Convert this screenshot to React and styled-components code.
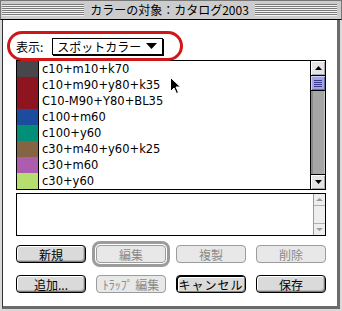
import React from "react";
import styled, { createGlobalStyle } from "styled-components";

const Global = createGlobalStyle`
  html, body { margin: 0; padding: 0; background: #d9d9d9; }
  body { font-family: "Noto Sans CJK JP", "DejaVu Sans", sans-serif; }
`;

const Window = styled.div`
  position: relative;
  width: 342px;
  height: 311px;
  box-sizing: border-box;
  background: #d9d9d9;
  display: flex;
  flex-direction: column;
  overflow: hidden;
`;

const TitleBar = styled.div`
  box-sizing: border-box;
  height: 20px;
  background: #cccccc;
  border: 1px solid #777;
  border-bottom-color: #000;
  padding: 0 4px 0 1px;
  display: flex;
  align-items: center;
`;

const Stripes = styled.div`
  flex: 1;
  height: 12px;
  background: repeating-linear-gradient(
    to bottom,
    #7a7a7a 0 1px,
    #f4f4f4 1px 2px
  );
`;

const Title = styled.div`
  padding: 0 6px;
  font-family: "Noto Sans CJK JP", sans-serif;
  font-size: 12px;
  line-height: 18px;
  color: #000;
  white-space: nowrap;
`;

const Body = styled.div`
  flex: 1;
  margin: 0 2px 2px 2px;
  background: #fff;
  border-left: 1px solid #333;
  border-right: 3px solid #6b6b6b;
  border-bottom: 3px solid #6b6b6b;
  padding: 11px 11px 0 13px;
  display: flex;
  flex-direction: column;
`;

const PopupWrap = styled.div`
  position: relative;
  z-index: 2;
  box-sizing: border-box;
  margin: 0 0 -1px -9px;
  width: 176px;
  height: 30px;
  border: 3px solid #d01616;
  border-radius: 15px;
  padding-left: 6px;
  display: flex;
  align-items: center;
  gap: 9px;
`;

const Label = styled.span`
  font-size: 12px;
  color: #000;
  font-family: "Noto Sans CJK JP", sans-serif;
`;

const Popup = styled.div`
  box-sizing: border-box;
  width: 111px;
  height: 17px;
  border: 1px solid #000;
  box-shadow: 1px 1px 0 #000;
  background: #fff;
  display: flex;
  align-items: center;
  justify-content: space-between;
  padding: 0 5px 0 4px;
  font-size: 12px;
  font-family: "Noto Sans CJK JP", sans-serif;
`;

const List = styled.div`
  box-sizing: border-box;
  height: 130px;
  border: 1px solid #000;
  display: grid;
  grid-template-columns: 1fr 15px;
`;

const Rows = styled.div`
  display: flex;
  flex-direction: column;
`;

const Row = styled.div`
  height: 16px;
  display: grid;
  grid-template-columns: 21px 1px 1fr;
`;

const Swatch = styled.div`
  background: ${(p) => p.$c};
`;

const Divider = styled.div`
  background: #000;
`;

const RowText = styled.div`
  padding-left: 3px;
  font-family: "DejaVu Sans", sans-serif;
  font-size: 11.5px;
  line-height: 16px;
  color: #000;
  white-space: nowrap;
`;

const ScrollBar = styled.div`
  border-left: 1px solid #000;
  display: flex;
  flex-direction: column;
`;

const ArrowBtn = styled.div`
  height: ${(p) => p.$h || 15}px;
  box-sizing: border-box;
  background: ${(p) => (p.$disabled ? "#eeeeee" : "#e4e4e4")};
  box-shadow: ${(p) =>
    p.$disabled ? "none" : "inset 1px 1px 0 #fff, inset -1px -1px 0 #a8a8a8"};
  ${(p) => (p.$top ? `border-bottom: 1px solid ${p.$line};` : `border-top: 1px solid ${p.$line};`)}
  display: flex;
  align-items: center;
  justify-content: center;
`;

const Thumb = styled.div`
  height: 15px;
  box-sizing: border-box;
  background: #a4a4e4;
  border-bottom: 1px solid #000;
  box-shadow: inset 1px 1px 0 #d0d0ff, inset -1px -1px 0 #6a6ab0;
  display: flex;
  flex-direction: column;
  justify-content: center;
  align-items: center;
  gap: 1px;
`;

const Grip = styled.div`
  width: 8px;
  height: 1px;
  background: #3c3c8c;
`;

const Track = styled.div`
  flex: 1;
  background: #a6a6a6;
  box-shadow: inset 2px 0 0 #8a8a8a, inset -1px 0 0 #c4c4c4;
`;

const TextBox = styled.div`
  box-sizing: border-box;
  margin-top: 3px;
  height: 43px;
  border: 1px solid #000;
  display: grid;
  grid-template-columns: 1fr 12px;
`;

const SmallBar = styled.div`
  border-left: 1px solid #9a9a9a;
  background: #eeeeee;
  display: flex;
  flex-direction: column;
  justify-content: space-between;
`;

const Buttons = styled.div`
  margin-top: 9px;
  display: grid;
  grid-template-columns: repeat(4, 70px);
  grid-auto-rows: 18px;
  column-gap: 10px;
  row-gap: 12px;
`;

const Button = styled.div`
  box-sizing: border-box;
  height: 18px;
  border: 1px solid ${(p) => (p.$disabled ? "#9c9c9c" : "#000")};
  border-radius: 4px;
  background: ${(p) => (p.$disabled ? "#e8e8e8" : "#dadada")};
  box-shadow: ${(p) =>
    p.$disabled
      ? "none"
      : p.$focus
      ? "inset 1px 1px 0 #000, inset 2px 2px 0 #fff, inset -1px -1px 0 #888"
      : "inset 1px 1px 0 #fff, inset -1px -1px 0 #7c7c7c, inset -2px -2px 0 #b8b8b8"};
  color: ${(p) => (p.$disabled ? "#8a8a8a" : "#000")};
  font-family: "Noto Sans CJK JP", sans-serif;
  font-size: 12px;
  letter-spacing: ${(p) => p.$ls || 0}px;
  display: flex;
  align-items: center;
  justify-content: center;
  white-space: nowrap;
`;

const DefaultRing = styled.div`
  margin: -4px;
  padding: 1px;
  border: 3px solid #9c9c9c;
  border-radius: 8px;
  display: flex;
  flex-direction: column;
`;

const Cursor = styled.svg`
  position: absolute;
  left: 170px;
  top: 77px;
  z-index: 5;
`;

const Tri = ({ up, color = "#000", w = 9, h = 5 }) => (
  <svg width={w} height={h} viewBox={`0 0 ${w} ${h}`}>
    <polygon
      points={up ? `0,${h} ${w},${h} ${w / 2},0` : `0,0 ${w},0 ${w / 2},${h}`}
      fill={color}
    />
  </svg>
);

const colors = [
  ["#48464b", "c10+m10+k70"],
  ["#8e1520", "c10+m90+y80+k35"],
  ["#8e1520", "C10-M90+Y80+BL35"],
  ["#1c4c9e", "c100+m60"],
  ["#028f77", "c100+y60"],
  ["#856444", "c30+m40+y60+k25"],
  ["#ae5cae", "c30+m60"],
  ["#b6de6e", "c30+y60"],
];

export default function App() {
  return (
    <>
      <Global />
      <Window>
        <TitleBar>
          <Stripes />
          <Title>カラーの対象：カタログ2003</Title>
          <Stripes />
        </TitleBar>
        <Body>
          <PopupWrap>
            <Label>表示:</Label>
            <Popup>
              <span>スポットカラー</span>
              <Tri w={11} h={6} />
            </Popup>
          </PopupWrap>
          <List>
            <Rows>
              {colors.map(([c, t]) => (
                <Row key={t}>
                  <Swatch $c={c} />
                  <Divider />
                  <RowText>{t}</RowText>
                </Row>
              ))}
            </Rows>
            <ScrollBar>
              <ArrowBtn $top $line="#000">
                <Tri up w={7} h={4} />
              </ArrowBtn>
              <Thumb>
                <Grip />
                <Grip />
                <Grip />
                <Grip />
              </Thumb>
              <Track />
              <ArrowBtn $line="#000">
                <Tri w={7} h={4} />
              </ArrowBtn>
            </ScrollBar>
          </List>
          <TextBox>
            <div />
            <SmallBar>
              <ArrowBtn $top $disabled $h={12} $line="#b0b0b0">
                <Tri up w={7} h={3} color="#9a9a9a" />
              </ArrowBtn>
              <ArrowBtn $disabled $h={12} $line="#b0b0b0">
                <Tri w={7} h={3} color="#9a9a9a" />
              </ArrowBtn>
            </SmallBar>
          </TextBox>
          <Buttons>
            <Button>新規</Button>
            <DefaultRing>
              <Button $disabled>編集</Button>
            </DefaultRing>
            <Button $disabled>複製</Button>
            <Button $disabled>削除</Button>
            <Button>追加...</Button>
            <Button $disabled>ﾄﾗｯﾌﾟ 編集</Button>
            <Button $focus $ls={1}>キャンセル</Button>
            <Button>保存</Button>
          </Buttons>
        </Body>
        <Cursor width="12" height="18" viewBox="0 0 12 18">
          <path
            d="M0.5 0.5 L0.5 14.5 L4 11 L6.5 16.5 L8.5 15.5 L6 10 L10.5 10 Z"
            fill="#000"
            stroke="#fff"
            strokeWidth="1"
          />
        </Cursor>
      </Window>
    </>
  );
}
